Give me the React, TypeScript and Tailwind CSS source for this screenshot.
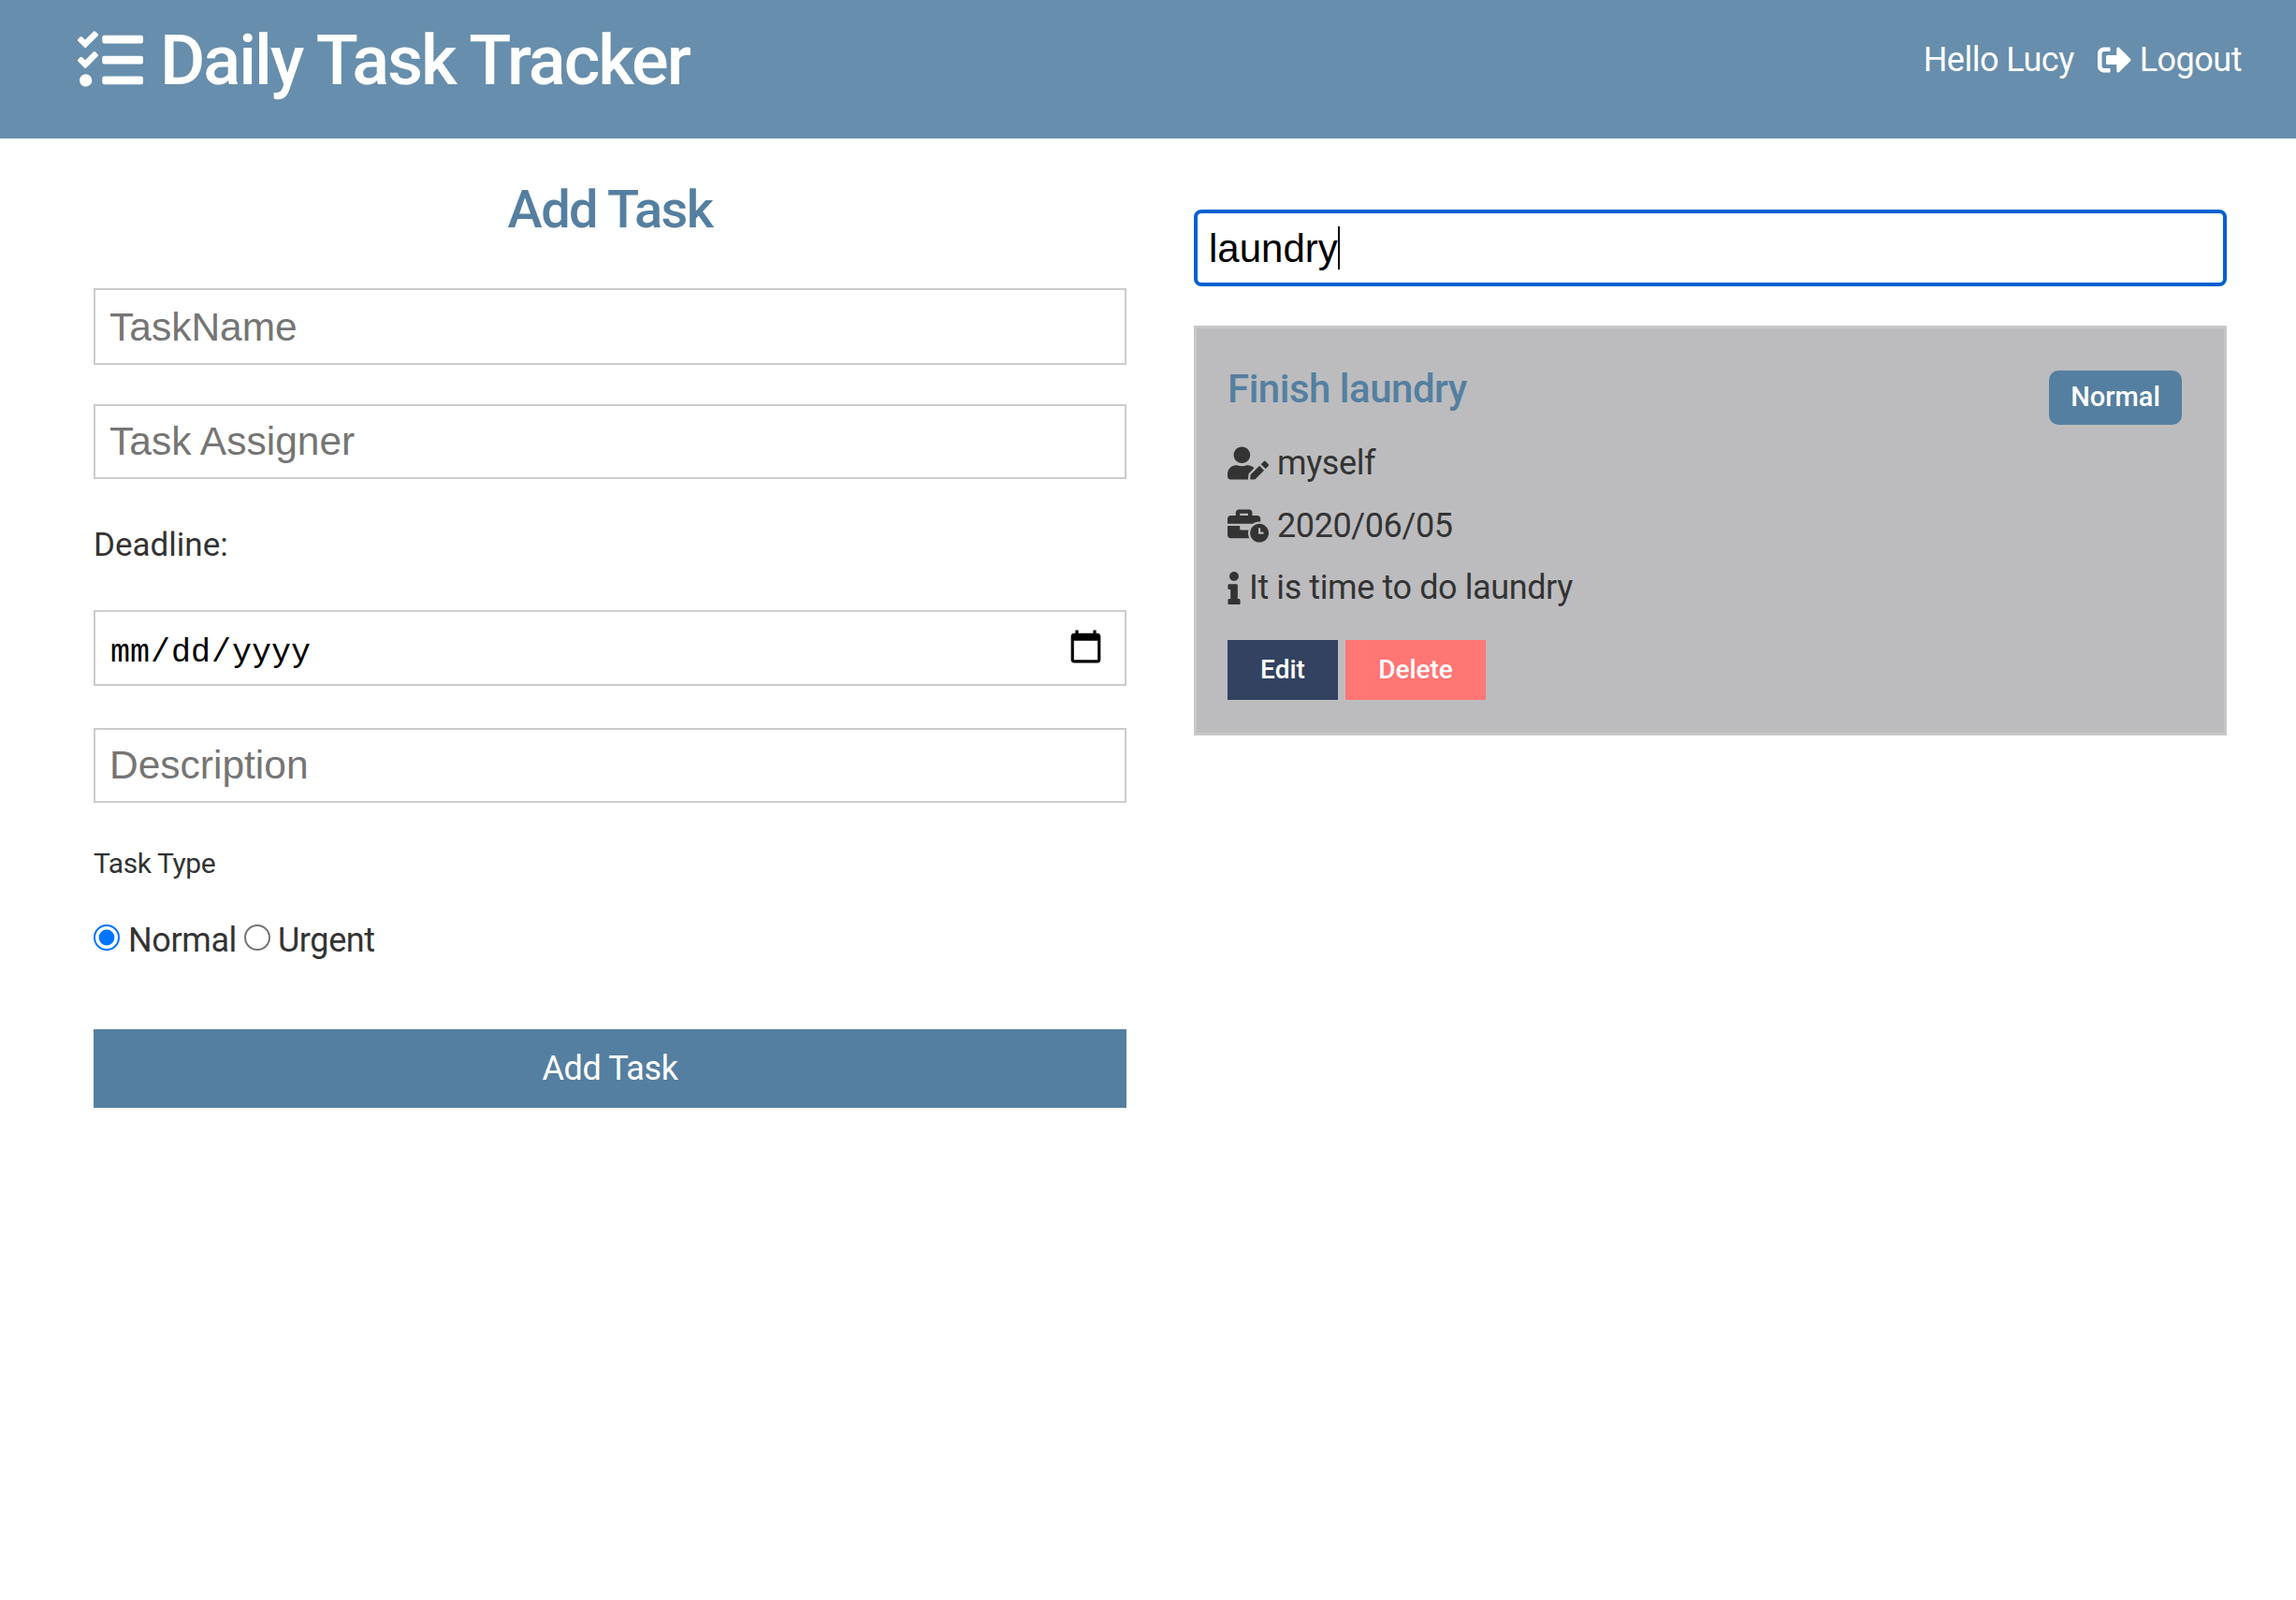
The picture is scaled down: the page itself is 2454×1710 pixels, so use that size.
import React from 'react';
import { FaTasks, FaSignOutAlt, FaUserEdit, FaBusinessTime, FaInfo } from 'react-icons/fa';

const inputClass =
  'w-full bg-white border-2 border-[#cccccc] px-[15px] text-[42.5px] text-black placeholder:text-[#757575] outline-none font-["Liberation_Sans",sans-serif]';

export default function App() {
  return (
    <div className="min-h-[1710px] bg-white font-['Roboto',sans-serif] text-[#333333]">
      {/* Header */}
      <header className="h-[148px] bg-[#678eac] flex items-center justify-between pl-[83px] pr-[58px] pb-[21px] text-white">
        <div className="flex items-center gap-[18px]">
          <FaTasks size={70} />
          <h1 className="text-[74px] leading-none font-medium tracking-[-2px] pt-[2px]">Daily Task Tracker</h1>
        </div>
        <div className="flex items-center text-[36px] leading-none tracking-[-0.5px] pt-[1px]">
          <span>Hello Lucy</span>
          <FaSignOutAlt size={36} className="ml-[25px] mr-[9px]" />
          <span>Logout</span>
        </div>
      </header>

      <main className="grid grid-cols-2 gap-[72px] pl-[100px] pr-[74px]">
        {/* Add task form */}
        <form className="flex flex-col">
          <h2 className="mt-[36px] h-[80px] leading-[80px] text-center text-[56px] font-medium tracking-[-1.6px] text-[#557fa0]">
            Add Task
          </h2>
          <input className={`${inputClass} mt-[44px] h-[82px] pt-[2px]`} placeholder="TaskName" />
          <input className={`${inputClass} mt-[42px] h-[80px]`} placeholder="Task Assigner" />
          <label className="mt-[49px] h-[44px] leading-[44px] text-[35px]">Deadline:</label>
          <input
            type="date"
            className="mt-[47px] h-[81px] w-full bg-white border-2 border-[#cccccc] pl-[15px] pr-[16px] pt-[12px] text-[35px] font-medium text-black outline-none font-['Liberation_Mono',monospace] [&::-webkit-calendar-picker-indicator]:w-[41px] [&::-webkit-calendar-picker-indicator]:h-[41px] [&::-webkit-calendar-picker-indicator]:p-0 [&::-webkit-calendar-picker-indicator]:mr-[5px] [&::-webkit-calendar-picker-indicator]:mb-[12px]"
          />
          <input className={`${inputClass} mt-[45px] h-[80px]`} placeholder="Description" />
          <label className="mt-[45px] h-[40px] leading-[40px] text-[30px] tracking-[-0.4px]">Task Type</label>
          <div className="mt-[39px] h-[40px] flex items-center text-[36px] tracking-[-0.4px]">
            <input type="radio" name="type" defaultChecked className="w-[14px] h-[14px] m-0 [zoom:2]" />
            <span className="ml-[9px] pt-[6px]">Normal</span>
            <input type="radio" name="type" className="w-[14px] h-[14px] ml-[4px] mr-0 my-0 [zoom:2]" />
            <span className="ml-[8px] pt-[6px]">Urgent</span>
          </div>
          <button type="button" className="mt-[78px] h-[84px] w-full bg-[#557fa0] text-white text-[36px] tracking-[-0.4px]">
            Add Task
          </button>
        </form>

        {/* Search and results */}
        <div className="flex flex-col pt-[76px]">
          <div className="relative">
            <input
              autoFocus
              defaultValue="laundry"
              className="block h-[82px] w-full bg-white border-[4px] border-[#0060d0] rounded-[8px] px-[12px] pt-[2px] text-[42px] text-black outline-none font-['Liberation_Sans',sans-serif]"
            />
            {/* caret does not show in a screenshot */}
            <span className="absolute left-[154px] top-[18px] h-[46px] w-[2px] bg-black" />
          </div>
          <div className="mt-[42px] h-[438px] bg-[#bcbcbe] border-[3px] border-[#c8c8c8] pl-[33px] pr-[45px] pt-[45px]">
            <div className="flex items-start justify-between">
              <h3 className="text-[42px] leading-[40px] font-medium tracking-[-0.5px] text-[#557fa0]">Finish laundry</h3>
              <span className="h-[58px] w-[142px] rounded-[10px] bg-[#557fa0] text-white text-[29px] font-medium flex items-center justify-center">
                Normal
              </span>
            </div>
            <div className="mt-[16px] flex items-center h-[50px] text-[36px] tracking-[-0.4px]">
              <FaUserEdit size={44} className="mr-[9px]" />
              <span>myself</span>
            </div>
            <div className="mt-[17px] flex items-center h-[50px] text-[36px] tracking-[-0.4px]">
              <FaBusinessTime size={44} className="mr-[9px]" />
              <span>2020/06/05</span>
            </div>
            <div className="mt-[16px] flex items-center h-[50px] text-[36px] tracking-[-0.4px]">
              <FaInfo size={35} className="w-[14px] mr-[9px]" />
              <span>It is time to do laundry</span>
            </div>
            <div className="mt-[31px] flex gap-[8px]">
              <button type="button" className="h-[64px] w-[118px] bg-[#324260] text-white text-[28px] font-medium">
                Edit
              </button>
              <button type="button" className="h-[64px] w-[150px] bg-[#ff7675] text-white text-[28px] font-medium">
                Delete
              </button>
            </div>
          </div>
        </div>
      </main>
    </div>
  );
}
